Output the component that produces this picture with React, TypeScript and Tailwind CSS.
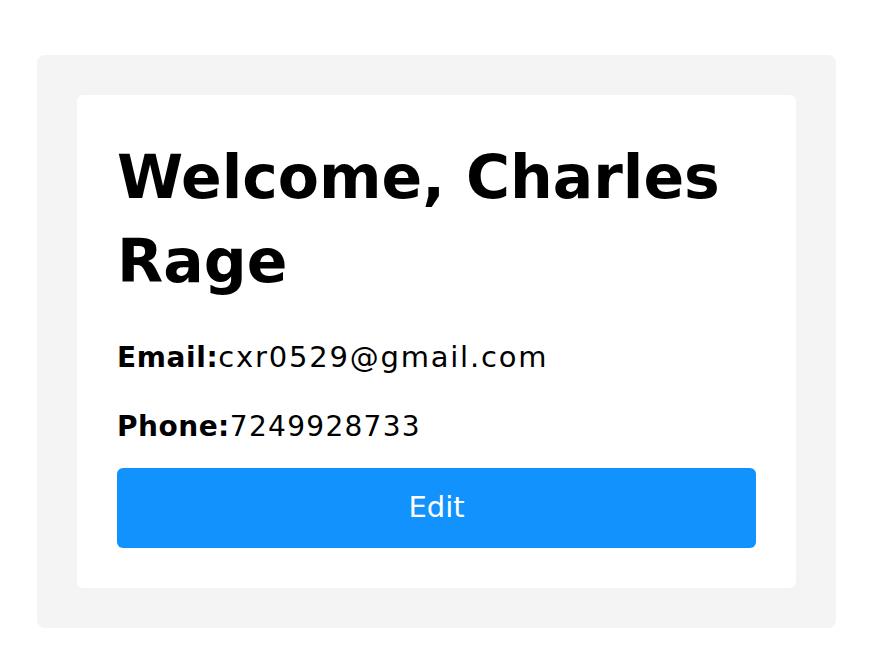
export default function App() {
  return (
    <div className="min-h-screen bg-white pt-[55px] pl-[37px]">
      {/* ---- OUTER PANEL ---- */}
      <div className="w-[799px] rounded-lg bg-[#f4f4f4] p-10">
        {/* Profile card */}
        <div
          className="rounded-md bg-white p-10 text-black"
          style={{ fontFamily: '"DejaVu Sans", sans-serif' }}
        >
          <h1 className="text-[60px] font-bold leading-[84px]">Welcome, Charles Rage</h1>

          <p className="mt-[33px] h-[42px] text-[28px] leading-[42px]">
            <span className="font-bold tracking-[0.6px]">Email:</span>
            <span className="text-[29px] tracking-[1.8px]">cxr0529@gmail.com</span>
          </p>
          <p className="mt-[28px] h-[42px] text-[28px] leading-[42px]">
            <span className="font-bold tracking-[0.5px]">Phone:</span>
            <span className="tracking-[1.3px]">7249928733</span>
          </p>

          <button className="mt-[20px] flex h-[80px] w-full items-center justify-center rounded-md bg-[#1192fc] text-[29px] text-white">
            Edit
          </button>
        </div>
      </div>
    </div>
  );
}
